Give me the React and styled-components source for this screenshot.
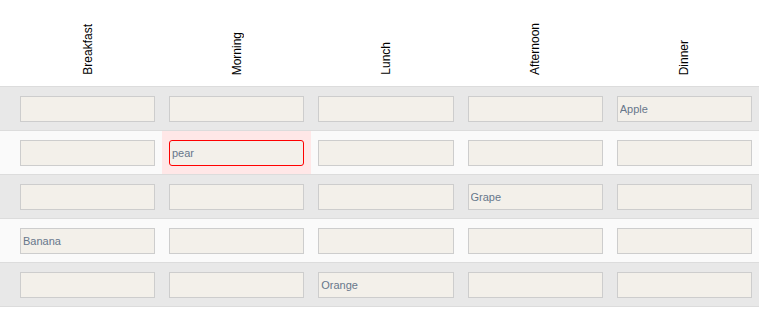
import React from 'react'
import styled, { createGlobalStyle } from 'styled-components'

const Global = createGlobalStyle`
  body {
    margin: 0;
    background: #ffffff;
    font-family: "Liberation Sans", Arial, sans-serif;
  }
`;

const cols = '162px repeat(4, 1fr)';

const Table = styled.div`
  width: 759px;
`;

const Head = styled.div`
  display: grid;
  grid-template-columns: ${cols};
  height: 86px;
`;

const HeadCell = styled.div`
  display: flex;
  justify-content: center;
  align-items: flex-end;
  padding: 0 7px 11px ${p => (p.$first ? '20px' : '7px')};
`;

const Label = styled.span`
  writing-mode: vertical-rl;
  transform: rotate(180deg);
  font-size: 12px;
  color: #000;
  line-height: 14px;
`;

const Row = styled.div`
  display: grid;
  grid-template-columns: ${cols};
  height: 44px;
  box-sizing: border-box;
  border-top: 1px solid #dcdcdc;
  background: ${p => (p.$odd ? '#e8e8e8' : '#fafafa')};
  &:last-child {
    height: 45px;
    border-bottom: 1px solid #dcdcdc;
  }
`;

const Cell = styled.div`
  display: flex;
  align-items: center;
  padding: 0 7px 0 ${p => (p.$first ? '20px' : '7px')};
  background: ${p => (p.$error ? '#ffe7e7' : 'transparent')};
`;

const Input = styled.input`
  width: 100%;
  height: 26px;
  box-sizing: border-box;
  margin: 0;
  padding: 0 2px;
  border: 1px solid ${p => (p.$error ? '#f00' : '#cdcdcd')};
  border-radius: ${p => (p.$error ? '3px' : '0')};
  background: #f3f0ea;
  font-family: "Liberation Sans", Arial, sans-serif;
  font-size: 11px;
  color: #67778a;
  outline: none;
`;

const meals = ['Breakfast', 'Morning', 'Lunch', 'Afternoon', 'Dinner'];

const data = [
  ['', '', '', '', 'Apple'],
  ['', 'pear', '', '', ''],
  ['', '', '', 'Grape', ''],
  ['Banana', '', '', '', ''],
  ['', '', 'Orange', '', ''],
];

export default function App() {
  return (
    <>
      <Global />
      <Table>
        <Head>
          {meals.map((m, i) => (
            <HeadCell key={m} $first={i === 0}>
              <Label>{m}</Label>
            </HeadCell>
          ))}
        </Head>
        {data.map((row, r) => (
          <Row key={r} $odd={r % 2 === 0}>
            {row.map((v, c) => {
              const err = r === 1 && c === 1;
              return (
                <Cell key={c} $first={c === 0} $error={err}>
                  <Input defaultValue={v} $error={err} />
                </Cell>
              );
            })}
          </Row>
        ))}
      </Table>
    </>
  );
}
